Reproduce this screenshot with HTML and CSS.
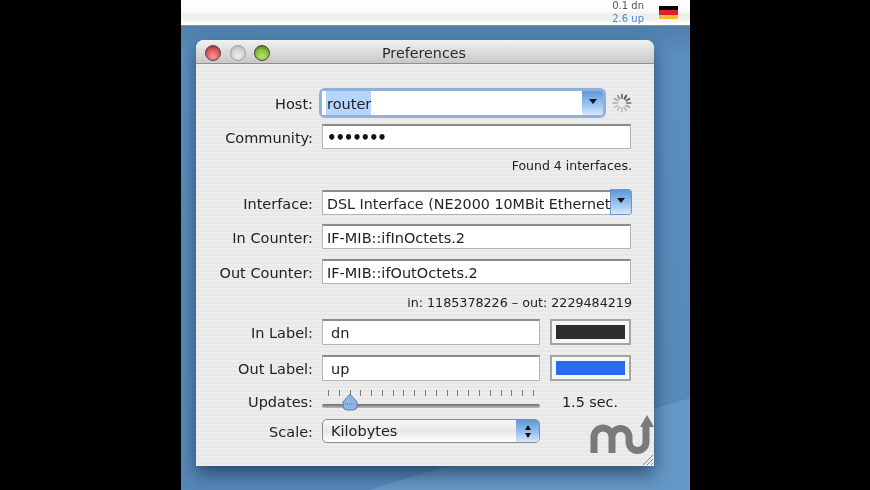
FILE: index.html
```html
<!DOCTYPE html>
<html lang="en">
<head>
    <meta charset="UTF-8">
    <meta name="viewport" content="width=device-width, initial-scale=1.0">
    <title>Preferences</title>
    <link rel="stylesheet" href="styles.css">
</head>
<body>
    <div class="screen">
        <div class="menubar">
            <div class="rates">
                <span class="rate-dn">0.1 dn</span>
                <span class="rate-up">2.6 up</span>
            </div>
            <div class="flag"><i class="black"></i><i class="red"></i><i class="gold"></i></div>
        </div>

        <div class="desktop">
            <svg class="swoosh" width="509" height="465" viewBox="0 0 509 465">
                <path d="M185 465 C280 435 400 405 509 372 V465 Z" fill="#6598c6"/>
            </svg>

            <div class="window">
                <div class="titlebar">
                    <div class="lights">
                        <i class="light red-light"></i>
                        <i class="light grey-light"></i>
                        <i class="light green-light"></i>
                    </div>
                    <h1>Preferences</h1>
                </div>

                <div class="form">
                    <div class="row row-host">
                        <label>Host:</label>
                        <div class="combo focused">
                            <div class="field"><span class="selected">router</span></div>
                            <div class="arrow-btn"><i class="caret"></i></div>
                        </div>
                        <svg class="spinner" width="20" height="20" viewBox="0 0 20 20">
                            <g stroke-width="2" stroke-linecap="round">
                                <path d="M10 1.5V5" stroke="#777"/>
                                <path d="M14.2 2.7L12.5 5.7" stroke="#555"/>
                                <path d="M17.3 5.8L14.3 7.5" stroke="#666"/>
                                <path d="M18.5 10H15" stroke="#888"/>
                                <path d="M17.3 14.2L14.3 12.5" stroke="#aaa"/>
                                <path d="M14.2 17.3L12.5 14.3" stroke="#bbb"/>
                                <path d="M10 18.5V15" stroke="#c4c4c4"/>
                                <path d="M5.8 17.3L7.5 14.3" stroke="#c4c4c4"/>
                                <path d="M2.7 14.2L5.7 12.5" stroke="#c4c4c4"/>
                                <path d="M1.5 10H5" stroke="#bbb"/>
                                <path d="M2.7 5.8L5.7 7.5" stroke="#aaa"/>
                                <path d="M5.8 2.7L7.5 5.7" stroke="#999"/>
                            </g>
                        </svg>
                    </div>
                    <div class="row row-community">
                        <label>Community:</label>
                        <div class="field wide dots">•••••••</div>
                    </div>
                    <p class="note note-found">Found 4 interfaces.</p>

                    <div class="row row-interface">
                        <label>Interface:</label>
                        <div class="combo wide">
                            <div class="field iface-name">DSL Interface (NE2000 10MBit Ethernet</div>
                            <div class="arrow-btn small"><i class="caret"></i></div>
                        </div>
                    </div>
                    <div class="row row-incounter">
                        <label>In Counter:</label>
                        <div class="field wide">IF-MIB::ifInOctets.2</div>
                    </div>
                    <div class="row row-outcounter">
                        <label>Out Counter:</label>
                        <div class="field wide">IF-MIB::ifOutOctets.2</div>
                    </div>
                    <p class="note note-counts">in: 1185378226 – out: 2229484219</p>

                    <div class="row row-inlabel">
                        <label>In Label:</label>
                        <div class="field short">dn</div>
                        <div class="swatch"><i class="dark"></i></div>
                    </div>
                    <div class="row row-outlabel">
                        <label>Out Label:</label>
                        <div class="field short">up</div>
                        <div class="swatch"><i class="blue"></i></div>
                    </div>

                    <div class="row row-updates">
                        <label>Updates:</label>
                        <div class="slider">
                            <div class="ticks">
                                <i></i><i></i><i></i><i></i><i></i><i></i><i></i><i></i><i></i><i></i>
                                <i></i><i></i><i></i><i></i><i></i><i></i><i></i><i></i><i></i><i></i>
                            </div>
                            <div class="track"></div>
                            <svg class="thumb" width="16" height="18" viewBox="0 0 16 18">
                                <path d="M8 1 L15 9 V13 Q15 17 11 17 H5 Q1 17 1 13 V9 Z" fill="#8db7e2" stroke="#5f7d9e" stroke-width="1"/>
                                <path d="M3 11H13" stroke="#4f78a6" stroke-dasharray="1 1"/>
                            </svg>
                        </div>
                        <span class="secs">1.5 sec.</span>
                    </div>

                    <div class="row row-scale">
                        <label>Scale:</label>
                        <div class="popup">
                            <span class="popup-text">Kilobytes</span>
                            <div class="stepper"><i class="up"></i><i class="down"></i></div>
                        </div>
                    </div>
                </div>

                <svg class="logo" width="66" height="44" viewBox="0 0 66 44">
                    <path d="M5 41V25A9 9 0 0 1 23 25V41M23 25A8.5 8.5 0 0 1 40 25V30A8.5 8.5 0 0 0 57 30V12" fill="none" stroke="#7a7a7a" stroke-width="7"/>
                    <path d="M51 15H65L58 3Z" fill="#7a7a7a"/>
                </svg>
                <svg class="grip" width="14" height="14" viewBox="0 0 14 14">
                    <path d="M13 3L3 13M13 7L7 13M13 11L11 13" stroke="#8a8a8a" stroke-width="1"/>
                </svg>
            </div>
        </div>
    </div>
</body>
</html>
```

FILE: styles.css
```css
html, body {
    margin: 0;
    height: 100%;
    background: #000;
    overflow: hidden;
}

body {
    font-family: "DejaVu Sans", sans-serif;
    color: #222;
}

.screen {
    width: 509px;
    height: 490px;
    margin-left: 181px;
    overflow: hidden;
    filter: blur(0.45px);
}

/* top bar */
.menubar {
    height: 25px;
    display: flex;
    justify-content: flex-end;
    align-items: center;
    padding-right: 12px;
    background: linear-gradient(#fff 0, #fbfbfb 11px, #ececec 15px, #f5f5f5 21px, #fff 24px);
    border-bottom: 1px solid #8d9499;
}

.rates {
    display: flex;
    flex-direction: column;
    align-items: flex-end;
    font-size: 10px;
    line-height: 13px;
    margin: 0 15px 2px 0;
}

.rate-dn { color: #555; }
.rate-up { color: #4c86c8; }

.flag {
    width: 19px;
    height: 13px;
    display: flex;
    flex-direction: column;
}

.flag i { flex: 1; }
.flag .black { background: #000; }
.flag .red { background: #d8232a; }
.flag .gold { background: #f5b82e; }

/* desktop */
.desktop {
    position: relative;
    height: 464px;
    padding: 14px 0 0 15px;
    box-sizing: border-box;
    background: linear-gradient(#4f7fab, #5b8fbf 30px, #5688b8);
}

.swoosh {
    position: absolute;
    left: 0;
    top: 0;
}

/* window */
.window {
    position: relative;
    width: 458px;
    height: 426px;
    border-radius: 8px 8px 0 0;
    background: repeating-linear-gradient(#ededed 0 2px, #e8e8e8 2px 4px);
    box-shadow: 0 8px 18px rgba(10, 30, 60, 0.6);
}

.titlebar {
    height: 23px;
    display: flex;
    align-items: center;
    justify-content: center;
    position: relative;
    padding-right: 2px;
    border-radius: 8px 8px 0 0;
    background: linear-gradient(#f1f1f1, #c8c8c8);
    border-bottom: 1px solid #8f8f8f;
}

.titlebar h1 {
    margin: 2px 0 0;
    font-size: 14.3px;
    font-weight: normal;
    color: #2c2c2c;
}

.lights {
    position: absolute;
    left: 9px;
    top: 5px;
    display: flex;
    gap: 8.5px;
}

.light {
    width: 16px;
    height: 16px;
    border-radius: 50%;
    box-sizing: border-box;
}

.red-light {
    background: radial-gradient(circle at 50% 75%, #f59a9a, #d85858 55%, #7a2626);
    border: 1px solid #5e3a3a;
}

.grey-light {
    background: radial-gradient(circle at 50% 70%, #f0f0f0, #c9c9c9 65%, #a5a5a5);
    border: 1px solid #a0a0a0;
}

.green-light {
    background: radial-gradient(circle at 50% 75%, #bde36a, #86bc3a 55%, #3f5f1e);
    border: 1px solid #3f4a35;
}

/* form */
.form {
    display: flex;
    flex-direction: column;
    font-size: 14.5px;
}

.row {
    display: flex;
    align-items: center;
    gap: 9px;
}

.row label {
    width: 117px;
    flex: none;
    padding-top: 2px;
    text-align: right;
}

.row-host { margin-top: 27px; height: 24px; }
.row-community { margin-top: 9px; height: 25px; }
.row-interface { height: 25px; }
.row-incounter { margin-top: 9px; height: 25px; }
.row-outcounter { margin-top: 10px; height: 25px; }
.row-inlabel { height: 26px; }
.row-outlabel { margin-top: 10px; height: 26px; }
.row-updates { margin-top: 9px; height: 29px; }
.row-scale { height: 24px; }

.note {
    margin: 0;
    padding-right: 22px;
    text-align: right;
}

.note-found { height: 41px; line-height: 34px; font-size: 12.5px; }
.note-counts { height: 35px; line-height: 37px; font-size: 12.7px; }

.field {
    box-sizing: border-box;
    height: 100%;
    padding-left: 4px;
    background: #fff;
    border: 1px solid #b4b4b4;
    border-top: 2px solid #8c8c8c;
    line-height: 24px;
    white-space: nowrap;
}

.wide { width: 309px; }

.short {
    width: 218px;
    padding-left: 8px;
}

.dots {
    font-size: 15px;
    letter-spacing: -1.2px;
    color: #111;
    font-weight: bold;
}

.combo {
    display: flex;
    height: 100%;
    position: relative;
}

.combo .field {
    flex: 1;
    min-width: 0;
}

.focused {
    width: 281px;
    border-radius: 3px;
    box-shadow: 0 0 0 3px #8fb2da;
}

.focused .field {
    border: 0;
    line-height: 26px;
}

.selected {
    display: inline-block;
    height: 100%;
    padding-left: 1px;
    background: #b5d5ff;
}

.iface-name { font-size: 14.3px; }

.arrow-btn {
    flex: none;
    width: 21px;
    display: flex;
    justify-content: center;
    align-items: center;
    background: linear-gradient(#5f97d8, #9cc6f0 60%, #d5e9fb);
    border-radius: 0 3px 3px 0;
}

.arrow-btn.small {
    width: 20px;
    height: 24px;
    box-shadow: 0 0 0 1px #6f95c2;
}

.caret {
    width: 0;
    height: 0;
    margin-bottom: 3px;
    border-left: 4px solid transparent;
    border-right: 4px solid transparent;
    border-top: 5px solid #111;
}

.spinner {
    flex: none;
}

.swatch {
    box-sizing: border-box;
    width: 81px;
    height: 100%;
    margin-left: 1px;
    padding: 4px;
    display: flex;
    background: #f6f6f6;
    border: 2px solid #a4a4a4;
}

.swatch i { flex: 1; }
.swatch .dark { background: #2d2d2d; }
.swatch .blue { background: #2a6cf0; }

/* slider */
.slider {
    width: 218px;
    height: 100%;
    flex: none;
    position: relative;
}

.ticks {
    display: flex;
    justify-content: space-between;
    margin: 0 6px;
    height: 6px;
}

.ticks i {
    width: 1px;
    background: #777;
}

.track {
    height: 4px;
    margin-top: 8px;
    border-radius: 2px;
    background: linear-gradient(#6d6d6d, #bbb);
}

.thumb {
    position: absolute;
    left: 20px;
    top: 3px;
}

.secs {
    margin: 0 0 5px 13px;
    font-size: 14.3px;
}

.row-updates label {
    padding-top: 0;
    margin-bottom: 5px;
}

.popup {
    box-sizing: border-box;
    width: 218px;
    height: 100%;
    display: flex;
    align-items: center;
    justify-content: space-between;
    border: 1px solid #8a8a8a;
    border-radius: 5px;
    background: linear-gradient(#f8f8f8, #e6e6e6 50%, #fff);
    overflow: hidden;
}

.popup-text { padding-left: 8px; }

.stepper {
    width: 23px;
    height: 100%;
    display: flex;
    flex-direction: column;
    align-items: center;
    justify-content: center;
    gap: 3px;
    background: linear-gradient(#5f97d8, #9cc6f0 60%, #d5e9fb);
}

.stepper .up {
    border-left: 3px solid transparent;
    border-right: 3px solid transparent;
    border-bottom: 5px solid #111;
}

.stepper .down {
    border-left: 3px solid transparent;
    border-right: 3px solid transparent;
    border-top: 5px solid #111;
}

/* over the window */
.logo {
    position: absolute;
    right: -1px;
    bottom: 10px;
}

.grip {
    position: absolute;
    right: 0;
    bottom: 0;
}
```
